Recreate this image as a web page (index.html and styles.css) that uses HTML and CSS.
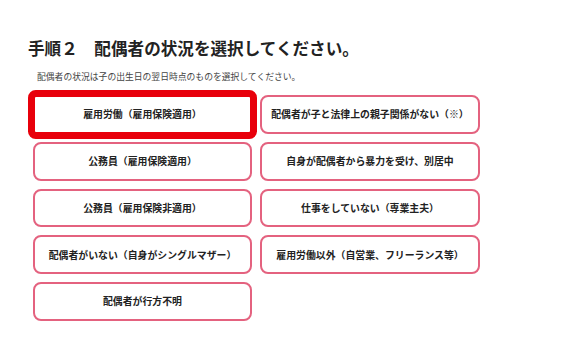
FILE: index.html
```html
<!DOCTYPE html>
<html lang="ja">
<head>
    <meta charset="UTF-8">
    <meta name="viewport" content="width=device-width, initial-scale=1.0">
    <title>配偶者の状況</title>
    <link rel="stylesheet" href="styles.css">
</head>
<body>
    <div class="step">
        <h2 class="step-title">手順２　配偶者の状況を選択してください。</h2>
        <p class="step-note">配偶者の状況は子の出生日の翌日時点のものを選択してください。</p>

        <div class="choices">
            <button class="choice selected">雇用労働（雇用保険適用）</button>
            <button class="choice">配偶者が子と法律上の親子関係がない（※）</button>
            <button class="choice">公務員（雇用保険適用）</button>
            <button class="choice">自身が配偶者から暴力を受け、別居中</button>
            <button class="choice">公務員（雇用保険非適用）</button>
            <button class="choice">仕事をしていない（専業主夫）</button>
            <button class="choice">配偶者がいない（自身がシングルマザー）</button>
            <button class="choice">雇用労働以外（自営業、フリーランス等）</button>
            <button class="choice">配偶者が行方不明</button>
        </div>
    </div>
</body>
</html>
```

FILE: styles.css
```css
body {
    margin: 0;
    background: #fff;
    font-family: "Noto Sans CJK JP", "Noto Sans", sans-serif;
    color: #222;
}
.step {
    padding: 38px 0 0 28px;
}
.step-title {
    margin: 0;
    font-size: 16.6px;
    line-height: 21px;
    font-weight: bold;
    color: #222;
}
.step-note {
    margin: 12px 0 0 9px;
    font-size: 8.8px;
    line-height: 12px;
    color: #444;
}
.choices {
    display: grid;
    grid-template-columns: 219px 220px;
    grid-auto-rows: 38.75px;
    column-gap: 8px;
    row-gap: 8px;
    margin: 12px 0 0 5px;
}
.choice {
    background: #fff;
    border: 2px solid #e4627f;
    border-radius: 8px;
    font-family: inherit;
    font-size: 9.9px;
    font-weight: bold;
    color: #222;
    padding: 0;
    cursor: pointer;
}
.choice.selected {
    border-color: #e8000b;
    border-radius: 3px;
    box-shadow: 0 0 0 5px #e8000b;
}
```
